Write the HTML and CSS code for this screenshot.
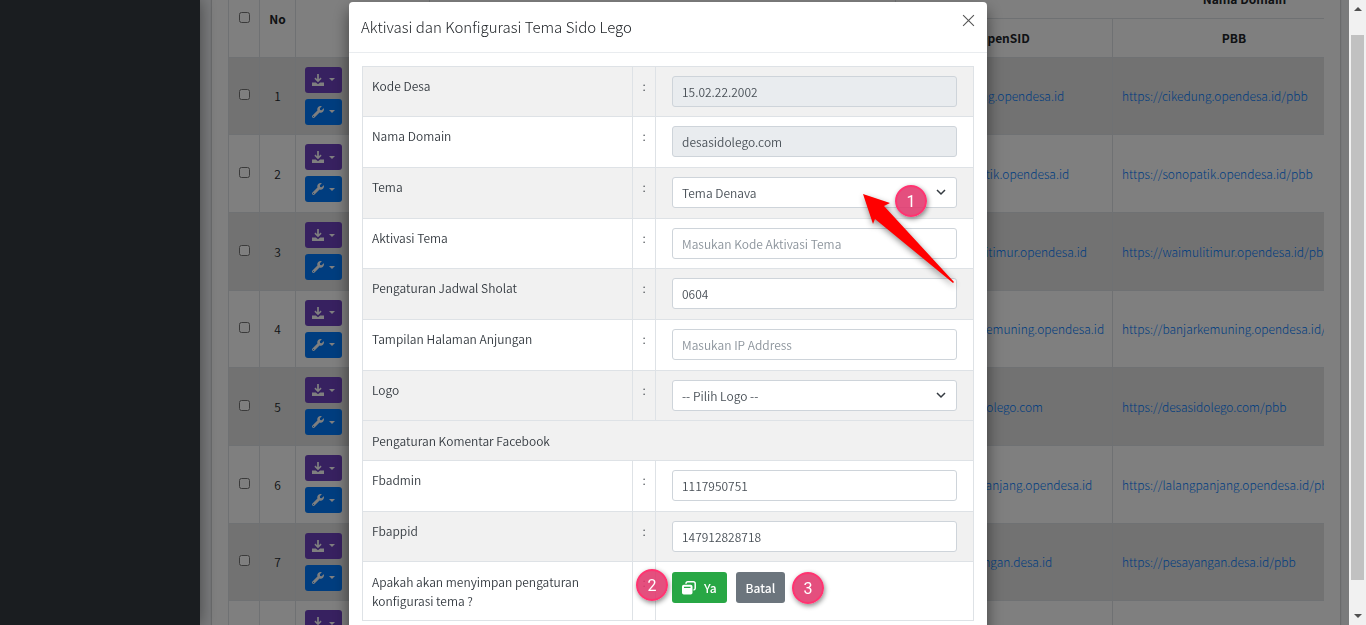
FILE: index.html
```html
<!DOCTYPE html>
<html lang="id">
<head>
<meta charset="utf-8">
<title>Aktivasi dan Konfigurasi Tema</title>
<link rel="stylesheet" href="styles.css">
<script src="app.js" defer></script>
</head>
<body>
<svg class="sprite" aria-hidden="true">
  <symbol id="i-download" viewBox="0 0 14 14"><path d="M6 0h2v6.200l2-2 1.200 1.200L7 9.600 2.800 5.400 4 4.200l2 2z"/><path d="M0 10h4.500L7 12l2.500-2H14v4H0z"/></symbol>
  <symbol id="i-wrench" viewBox="0 0 512 512"><path d="M507.730 109.100c-2.240-9.030-13.540-12.090-20.120-5.510l-74.360 74.360-67.880-11.310-11.310-67.880 74.360-74.360c6.620-6.620 3.430-17.900-5.660-20.160-47.380-11.740-99.550.91-136.580 37.930-39.640 39.640-50.550 97.100-34.050 147.200L18.740 402.760c-24.990 24.990-24.990 65.510 0 90.500 24.990 24.990 65.510 24.990 90.500 0l213.210-213.210c50.120 16.710 107.470 5.680 147.370-34.220 37.070-37.070 49.700-89.320 37.910-136.730zM64 472c-13.250 0-24-10.750-24-24 0-13.260 10.750-24 24-24s24 10.740 24 24c0 13.250-10.750 24-24 24z"/></symbol>
</svg>
<div class="page">
  <aside class="sidebar"></aside>
  <main class="content">
    <section class="card">
      <div class="table-wrap">
        <table class="list">
          <colgroup><col class="c-check"><col class="c-no"><col class="c-act"><col class="c-mid"><col class="c-sid"><col class="c-pbb"></colgroup>
          <thead>
            <tr class="head-top"><th rowspan="2"><input type="checkbox" aria-label="Pilih semua"></th><th rowspan="2">No</th><th rowspan="2">Aksi</th><th rowspan="2"></th><th colspan="2" class="domain">Nama Domain</th></tr>
            <tr class="head-sub"><th>OpenSID</th><th>PBB</th></tr>
          </thead>
          <tbody id="rows"></tbody>
        </table>
      </div>
    </section>
  </main>
  <div class="scrollbar" aria-hidden="true"><span class="arrow up"></span><span class="thumb"></span><span class="arrow down"></span></div>
</div>
<div class="backdrop">
  <div class="modal" role="dialog" aria-labelledby="title">
    <header class="modal-head">
      <h1 id="title">Aktivasi dan Konfigurasi Tema Sido Lego</h1>
      <button class="close" type="button" aria-label="Tutup"><svg viewBox="0 0 12 12"><path d="M1 1l10 10M11 1L1 11"/></svg></button>
    </header>
    <form class="modal-body">
      <table class="form">
        <tbody>
          <tr class="odd"><td><label for="kode">Kode Desa</label></td><td class="colon">:</td><td class="field"><input id="kode" value="15.02.22.2002" readonly></td></tr>
          <tr><td><label for="domain">Nama Domain</label></td><td class="colon">:</td><td class="field"><input id="domain" value="desasidolego.com" readonly></td></tr>
          <tr class="odd"><td><label for="tema">Tema</label></td><td class="colon">:</td><td class="field"><div class="select"><select id="tema"><option>Tema Denava</option></select><svg viewBox="0 0 10 7"><path d="M1 1l4 4 4-4"/></svg></div></td></tr>
          <tr><td><label for="aktivasi">Aktivasi Tema</label></td><td class="colon">:</td><td class="field"><input id="aktivasi" placeholder="Masukan Kode Aktivasi Tema"></td></tr>
          <tr class="odd"><td><label for="sholat">Pengaturan Jadwal Sholat</label></td><td class="colon">:</td><td class="field"><input id="sholat" value="0604"></td></tr>
          <tr><td><label for="anjungan">Tampilan Halaman Anjungan</label></td><td class="colon">:</td><td class="field"><input id="anjungan" placeholder="Masukan IP Address"></td></tr>
          <tr class="odd"><td><label for="logo">Logo</label></td><td class="colon">:</td><td class="field"><div class="select"><select id="logo"><option>-- Pilih Logo --</option></select><svg viewBox="0 0 10 7"><path d="M1 1l4 4 4-4"/></svg></div></td></tr>
          <tr class="odd section"><td colspan="3">Pengaturan Komentar Facebook</td></tr>
          <tr><td><label for="fbadmin">Fbadmin</label></td><td class="colon">:</td><td class="field"><input id="fbadmin" value="1117950751"></td></tr>
          <tr class="odd"><td><label for="fbappid">Fbappid</label></td><td class="colon">:</td><td class="field"><input id="fbappid" value="147912828718"></td></tr>
          <tr class="confirm"><td>Apakah akan menyimpan pengaturan<br>konfigurasi tema ?</td><td class="colon">:</td><td class="field"><div class="actions">
            <button class="btn yes" type="button"><svg viewBox="0 0 14 14"><path class="back" d="M4 2.800V2.500A1.700 1.700 0 0 1 5.700.8h5.800a1.700 1.700 0 0 1 1.700 1.700v4.800A1.700 1.700 0 0 1 11.500 9"/><path fill-rule="evenodd" d="M1.800 3.800h6.900a1.800 1.800 0 0 1 1.800 1.800v6.100a1.800 1.800 0 0 1-1.800 1.800H1.800A1.800 1.800 0 0 1 0 11.700V5.600a1.800 1.800 0 0 1 1.800-1.800zm.2 2v1.300h6.500V5.800z"/></svg>Ya</button>
            <button class="btn no" type="button">Batal</button></div></td></tr>
        </tbody>
      </table>
    </form>
    <svg class="pointer" viewBox="0 0 100 100"><path d="M3 4l27 9-6 3 70 76-1 1-78-64-2 5z"/></svg>
    <span class="badge one">1</span>
    <span class="badge two">2</span>
    <span class="badge three">3</span>
  </div>
</div>
</body>
</html>
```
FILE: app.js
```js
const sites = [
  "https://cikedung.opendesa.id",
  "https://sonopatik.opendesa.id",
  "https://waimulitimur.opendesa.id",
  "https://banjarkemuning.opendesa.id",
  "https://desasidolego.com",
  "https://lalangpanjang.opendesa.id",
  "https://pesayangan.desa.id",
  ""
];
const button = (kind, icon, label) =>
  `<button type="button" class="tool ${kind}" aria-label="${label}"><svg><use href="#${icon}"/></svg><i class="caret"></i></button>`;
const link = (url) => url ? `<a href="#">${url}</a>` : "";
document.getElementById("rows").innerHTML = sites.map((url, i) => `
  <tr>
    <td class="mid"><input type="checkbox" aria-label="Pilih ${i + 1}"></td>
    <td class="mid num">${url ? i + 1 : ""}</td>
    <td><div class="tools">${button("purple", "i-download", "Unduh")}${button("blue", "i-wrench", "Pengaturan")}</div></td>
    <td></td>
    <td>${link(url)}</td>
    <td>${link(url && url + "/pbb")}</td>
  </tr>`).join("");
```
FILE: styles.css
```css
* { box-sizing: border-box; }
html, body { margin: 0; height: 100%; overflow: hidden; }
body, button, input, select { font-family: "Noto Sans CJK SC DemiLight", "Noto Sans CJK SC", "Open Sans", sans-serif; font-size: 12px; font-weight: 350; line-height: 19px; color: #212529; }
.sprite { position: absolute; width: 0; height: 0; }
.page { display: flex; height: 100vh; overflow: hidden; background: #f4f6f9; }
.sidebar { flex: 0 0 200px; background: #343a40; box-shadow: 0 0 16px rgba(0,0,0,.45); z-index: 1; }
.content { flex: 1; min-width: 0; padding: 0 9px 0 12px; }
.card { margin-top: -20px; background: #fff; padding: 0 16px; box-shadow: 0 0 2px rgba(0,0,0,.4); }
.table-wrap { overflow: hidden; }
.list { width: 1128px; table-layout: fixed; border-collapse: collapse; }
.c-check { width: 31px; }
.c-no { width: 36px; }
.c-act { width: 134px; }
.c-mid { width: 466px; }
.c-sid { width: 217px; }
.list th, .list td { border: 1px solid #dee2e6; padding: 0 9px; white-space: nowrap; }
.list thead th { border-top: 0; font-family: "Noto Sans CJK SC", sans-serif; font-weight: 700; text-align: center; padding: 0; }
.list input { display: block; width: 11px; height: 11px; margin: 0 auto 2px; }
.list th:first-child, .list td:first-child { padding: 0; }
.list .head-top th { height: 38px; }
.list .head-top .domain { padding-left: 238px; }
.list .head-sub th { height: 39px; border-top: 1px solid #dee2e6; }
.list tbody tr { height: 78px; }
.list tbody tr:nth-child(3n+1) { height: 77px; }
.list tbody tr:nth-child(odd) { background: #e4e4e4; }
.list .mid { text-align: center; }
.list .num { padding: 0; }
.list a { color: #007bff; font-family: "Noto Sans CJK SC", sans-serif; font-weight: 300; text-decoration: none; }
.tools { display: flex; flex-direction: column; gap: 6px; }
.tool { display: flex; align-items: center; justify-content: center; gap: 5px; width: 37px; height: 26px; padding: 0; border: 0; border-radius: 3px; color: #fff; }
.tool svg { width: 12px; height: 12px; fill: #fff; }
.purple { background: #6f42c1; }
.blue { background: #007bff; }
.caret { border: 3px solid transparent; border-top-color: #fff; border-bottom: 0; }
.scrollbar { display: flex; flex-direction: column; align-items: center; flex: 0 0 17px; background: #f1f1f1; position: relative; z-index: 3; padding: 7px 0; }
.thumb { width: 13px; flex: 1; margin: 24px 0 34px; background: #c1c1c1; }
.arrow { border: 4px solid transparent; }
.up { border-top: 0; border-bottom-color: #505050; }
.down { border-bottom: 0; border-top-color: #505050; }
.backdrop { position: fixed; inset: 0 17px 0 0; z-index: 2; background: rgba(0,0,0,.5); overflow: hidden; padding: 2px 13px 0 0; }
.modal { position: relative; width: 638px; margin: 0 auto; background: #fff; border-radius: 4px; box-shadow: 0 8px 16px rgba(0,0,0,.5); }
.modal-head { display: flex; justify-content: space-between; align-items: flex-start; height: 51px; padding: 12px; border-bottom: 1px solid #e9ecef; }
h1 { margin: 0; font-size: 15px; font-family: "Noto Sans CJK SC", sans-serif; font-weight: 300; line-height: 25px; }
.close { padding: 0; border: 0; background: none; width: 13px; height: 13px; }
.close svg { display: block; width: 13px; height: 13px; fill: none; stroke: #555; stroke-width: 1; }
.modal-body { padding: 13px; }
.form { width: 100%; border-collapse: collapse; table-layout: fixed; }
.form td { border: 1px solid #dee2e6; padding: 9px; vertical-align: top; color: #343a40; }
.form tr:first-child td:first-child { width: 270px; }
.form tr:first-child .colon { width: 23px; }
.form .colon { padding: 9px 0; text-align: center; }
.form .field { padding: 9px 16px 10px; }
.form tr:nth-child(3n+1) .field { padding-bottom: 9px; }
.odd { background: #f1f1f1; }
.form .section td { padding: 10px 9px; }
.form input, .form select { display: block; width: 100%; height: 31px; border: 1px solid #ced4da; border-radius: 3px; background: #fff; color: #495057; padding: 0 9px; appearance: none; }
.form input[readonly] { background: #e9ecef; }
.form input::placeholder { color: #8b939b; opacity: 1; }
.select { position: relative; }
.select svg { position: absolute; right: 11px; top: 12px; width: 10px; height: 7px; fill: none; stroke: #343a40; stroke-width: 1.500; pointer-events: none; }
.form .confirm td { padding-top: 10px; }
.form .confirm .field { padding-top: 10px; padding-bottom: 17px; }
.actions { display: flex; gap: 9px; }
.btn { display: flex; align-items: center; gap: 8px; height: 31px; padding: 0 10px; border: 0; border-radius: 3px; color: #fff; font-family: "Noto Sans CJK SC", sans-serif; font-weight: 500; }
.btn svg { width: 14px; height: 14px; fill: #fff; }
.btn .back { fill: none; stroke: #fff; stroke-width: 1.500; }
.yes { background: #28a745; }
.no { background: #6c757d; }
.badge { position: absolute; width: 32px; height: 32px; border: 2px solid #ff3370; border-radius: 50%; background: rgba(224,55,108,.88); color: #fff; font: 16px/29px Roboto, sans-serif; text-align: center; box-shadow: 1px 2px 5px rgba(0,0,0,.45); }
.one { left: 546px; top: 183px; }
.two { left: 287px; top: 567px; }
.three { left: 443px; top: 570px; }
.pointer { position: absolute; left: 511px; top: 188px; width: 100px; height: 100px; fill: #f00; overflow: visible; filter: drop-shadow(1px 3px 3px rgba(0,0,0,.45)); }
```
